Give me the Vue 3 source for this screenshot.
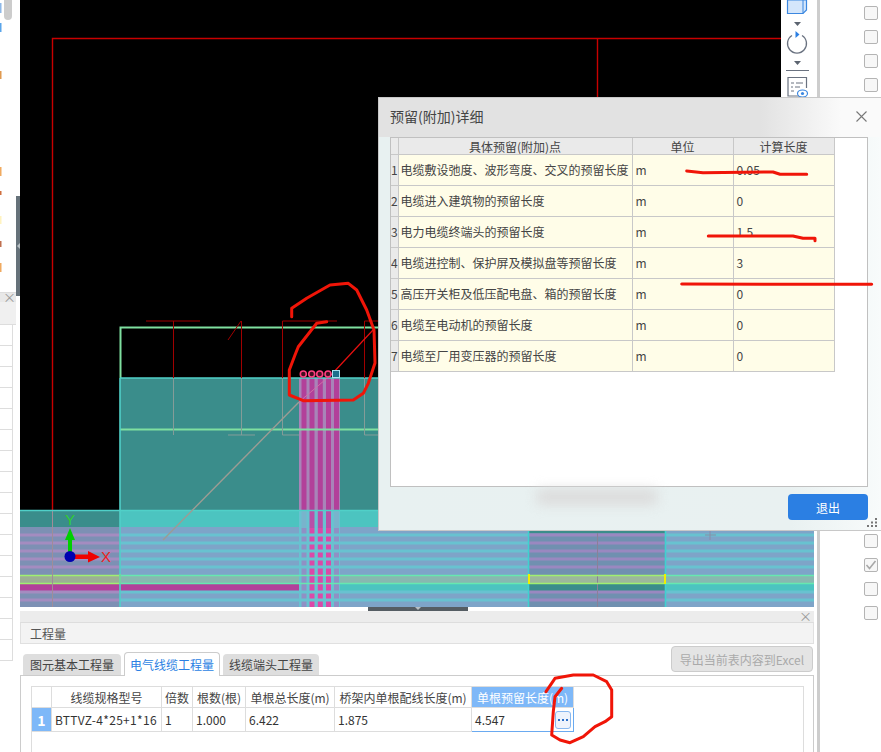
<script setup>
const details = [
  { name: '电缆敷设弛度、波形弯度、交叉的预留长度', value: '0.05' },
  { name: '电缆进入建筑物的预留长度', value: '0' },
  { name: '电力电缆终端头的预留长度', value: '1.5' },
  { name: '电缆进控制、保护屏及模拟盘等预留长度', value: '3' },
  { name: '高压开关柜及低压配电盘、箱的预留长度', value: '0' },
  { name: '电缆至电动机的预留长度', value: '0' },
  { name: '电缆至厂用变压器的预留长度', value: '0' },
]

const quantityCols = [
  { label: '', width: 20 },
  { label: '线缆规格型号', width: 110 },
  { label: '倍数', width: 31 },
  { label: '根数(根)', width: 53 },
  { label: '单根总长度(m)', width: 89 },
  { label: '桥架内单根配线长度(m)', width: 137 },
  { label: '单根预留长度(m)', width: 102 },
]

// horizontal stripes of the slab in the lower part of the drawing
const stripes = [533.5, 541.5, 549.5, 557.5, 565.5, 590.5, 598.5]
const columnBars = [301.5, 309.5, 317.8, 326, 334]
const circles = [303.3, 311.7, 319.7, 328]
const checkboxes = Array.from({ length: 26 }, (_, i) => i)
const sideRows = Array.from({ length: 16 }, (_, i) => i)
const sideMarks = [
  { y: 3, h: 10, c: '#8db8e8' }, { y: 23, h: 9, c: '#5aa5ea' }, { y: 71, h: 8, c: '#e09a50' },
  { y: 167, h: 9, c: '#f0aa60' }, { y: 191, h: 4, c: '#d07040' }, { y: 216, h: 8, c: '#fff3c0' },
  { y: 241, h: 6, c: '#c07050' }, { y: 263, h: 9, c: '#f0aa60' }, { y: 484, h: 3, c: '#334' },
]

const lowerBarColor = (i) => (i === 0 || i === 4 ? '#9090c4' : '#dc48a8')
const midBarColor = (i) => (i === 0 || i === 4 ? '#78b4cc' : '#b850a8')
</script>

<template>
  <div class="app">
    <aside class="side">
      <div class="side-top">
        <div class="thumb"></div>
        <svg class="side-marks" width="2" height="290">
          <rect v-for="m in sideMarks" :key="m.y" x="0" :y="m.y" width="1.5" :height="m.h" :fill="m.c" />
        </svg>
        <div class="splitter"><span class="splitter-arrow"></span></div>
      </div>
      <div class="side-head"><span class="side-x">×</span></div>
      <div class="side-sub"></div>
      <div v-for="r in sideRows" :key="r" class="side-row"></div>
    </aside>

    <main class="center">
      <svg class="cad" width="794" height="607" viewBox="20 0 794 607">
        <rect x="20" y="0" width="794" height="607" fill="#000" />
        <!-- frame -->
        <path d="M52.5 511V38.5H781M597.5 38.500V97" fill="none" stroke="#c80000" stroke-width="1.4" />
        <!-- slab -->
        <rect x="120" y="378" width="694" height="132" fill="#3a8d8b" />
        <rect x="20" y="511" width="100" height="17" fill="#3a8d8b" />
        <rect x="120" y="511" width="694" height="17" fill="#4cc4c0" />
        <rect x="20" y="527" width="100" height="80" fill="#7d90b4" />
        <rect x="120" y="527" width="694" height="80" fill="#7ea4c8" />
        <rect x="529" y="527" width="136" height="80" fill="#7090b0" />
        <rect x="529" y="527" width="136" height="6" fill="#3a8d8b" />
        <rect x="20" y="576" width="100" height="8" fill="#9cb094" />
        <rect x="120" y="576" width="694" height="8" fill="#88b8b0" />
        <rect x="529" y="576" width="136" height="8" fill="#9cb89c" />
        <rect x="20" y="584" width="279" height="7" fill="#b2409a" />
        <rect x="340" y="584" width="189" height="7" fill="#4cc4c0" />
        <rect x="529" y="584" width="136" height="7" fill="#3a8d8b" />
        <rect x="665" y="584" width="149" height="7" fill="#4cc4c0" />
        <!-- cable column -->
        <rect x="299" y="378" width="41" height="132" fill="#a884b8" />
        <rect v-for="x in columnBars" :key="x" :x="x" y="378" width="5" height="132" fill="#b2409a" />
        <rect x="299" y="510" width="41" height="97" fill="#68c2d0" />
        <rect v-for="(x, i) in columnBars" :key="'mid' + x" :x="x" y="510" width="5" height="18" :fill="midBarColor(i)" />
        <rect v-for="(x, i) in columnBars" :key="'low' + x" :x="x" y="528" width="5" height="79" :fill="lowerBarColor(i)" />
        <g v-for="y in stripes" :key="y">
          <rect x="20" :y="y" width="100" height="3" fill="#a48cc0" />
          <rect x="120" :y="y" width="409" height="3" fill="#68c2d0" />
          <rect x="529" :y="y" width="136" height="3" fill="#9a88c0" />
          <rect x="665" :y="y" width="149" height="3" fill="#68c2d0" />
        </g>
        <path d="M597.5 533V607" stroke="#8a8098" stroke-width="1" />
        <path d="M705 535H716M710 531V540" stroke="#8a8ca8" stroke-width="1" />
        <path d="M20 575.5H120M20 583.5H120M529 575.500H665M529 583.500H665" stroke="#a0f070" stroke-width="1.4" />
        <path d="M120 575.5H529M120 583.5H529M665 575.500H814M665 583.500H814" stroke="#66e8b0" stroke-width="1.4" />
        <path d="M120 574V584M529 574V584M665 574V584" stroke="#f0f000" stroke-width="2" />
        <path d="M528.500 510V574M665.500 510V574M528.500 584V607M665.500 584V607" stroke="#40d0d0" stroke-width="1.6" />
        <path d="M52.5 511V607" stroke="#a08c98" stroke-width="1" />
        <!-- outline -->
        <path d="M120.5 378V327.500H378M120 429.500H378" fill="none" stroke="#7fe0a0" stroke-width="2" />
        <path d="M120 378H378M20 510.500H814M120 378V607" fill="none" stroke="#50d0c8" stroke-width="1.6" />
        <!-- section marks -->
        <path d="M146 321H200M173.500 321V378M241.500 321V378M241 321L228 340M282.500 378V321H337M364.500 378V321H378" fill="none" stroke="#a00000" stroke-width="1" />
        <path d="M173.500 378V435M241.500 378V435M228 435H255M282.500 378V435H299M364.500 378V435H378" fill="none" stroke="#849c98" stroke-width="1" />
        <!-- leader -->
        <path d="M332 374L373 330" stroke="#e81010" stroke-width="1.2" />
        <path d="M332 374L299 402" stroke="#d070a8" stroke-width="1" />
        <path d="M299 402L163 540" stroke="#9c9c94" stroke-width="1.4" />
        <circle v-for="x in circles" :key="x" :cx="x" cy="374" r="3" fill="#401020" stroke="#ff3f80" stroke-width="1.6" />
        <rect x="332.500" y="370.500" width="7" height="7" fill="#1c6f8c" stroke="#a8e0f0" />
        <!-- axis gizmo -->
        <path d="M68 552V540H65L70 528L75 540H72V552Z" fill="#00d000" />
        <path d="M75 554.500H88V551L100 557L88 562.500V559H75Z" fill="#f00000" />
        <circle cx="70" cy="556.500" r="5.500" fill="#0000b0" />
        <text x="70" y="525" class="axis" fill="#30d030">Y</text>
        <text x="106" y="562" class="axis" fill="#f02020">X</text>
        <!-- scribble on the drawing -->
        <path class="ink" d="M291.7 316.7L291.7 308.3L306.7 298.3L330 285L348.3 283.3L356.7 290L366.7 310L374 330L375 363L368.3 383.3L363.3 393.3L353.3 400L303.3 400.7L289.3 395L289.3 370L295 355L298.3 346.7L316.7 323.3L326.7 321.7" />
      </svg>

      <div class="toolbar">
        <svg width="34" height="97" viewBox="781 0 34 97">
          <path d="M787.500 0V13.500H803L806.500 10V0Z" fill="#d4e6fb" stroke="#3b87e0" stroke-width="1.2" />
          <path d="M803 0V13.500" stroke="#3b87e0" stroke-width="1" />
          <path d="M794 22H801L797.500 26Z" fill="#5c6470" />
          <path d="M792 35.500A9.500 9.500 0 1 0 802 35.500" fill="none" stroke="#6a7280" stroke-width="1.3" />
          <path d="M795.500 31L799.500 34.500L795.500 38Z" fill="#2b7fe3" />
          <path d="M794 61H801L797.500 65Z" fill="#5c6470" />
          <path d="M786 70.500H809" stroke="#6a7280" stroke-width="1" />
          <path d="M801 96H788V77.500H806.500V88" fill="none" stroke="#6a7280" stroke-width="1.2" />
          <path d="M791 83H794M796 83H803M791 87H793M795 87H800M791 91H794" stroke="#6a7280" stroke-width="1" />
          <ellipse cx="802.500" cy="93.500" rx="5" ry="3.500" fill="#fff" stroke="#3b87e0" stroke-width="1.2" />
          <circle cx="802.500" cy="93.500" r="1.600" fill="#3b87e0" />
        </svg>
      </div>

      <div class="drag-handle"><span class="drag-arrow"></span></div>

      <section class="panel">
        <div class="panel-strip"><span class="panel-x">×</span></div>
        <div class="panel-title">工程量</div>
        <div class="tab-row">
          <div class="tabs">
            <div class="tab">图元基本工程量</div>
            <div class="tab active">电气线缆工程量</div>
            <div class="tab">线缆端头工程量</div>
          </div>
          <button class="export">导出当前表内容到Excel</button>
        </div>
        <div class="tab-body">
          <div class="qty-box">
            <table class="qty">
              <colgroup>
                <col v-for="c in quantityCols" :key="c.label" :style="{ width: c.width + 'px' }" />
              </colgroup>
              <thead>
                <tr>
                  <th v-for="(c, i) in quantityCols" :key="c.label" :class="{ picked: i === 6 }">{{ c.label }}</th>
                </tr>
              </thead>
              <tbody>
                <tr>
                  <td class="row-no">1</td>
                  <td class="spec">BTTVZ-4*25+1*16</td>
                  <td>1</td>
                  <td>1.000</td>
                  <td>6.422</td>
                  <td>1.875</td>
                  <td class="editing">
                    <div class="edit-cell">
                      <span>4.547</span>
                      <span class="more">
                        <svg width="10" height="4" viewBox="0 0 10 4">
                          <path d="M0 1h2v2H0zM4 1h2v2H4zM8 1h2v2H8z" fill="#2b6fc8" />
                        </svg>
                      </span>
                    </div>
                  </td>
                </tr>
              </tbody>
            </table>
          </div>
        </div>
      </section>
    </main>

    <aside class="right">
      <div class="checks">
        <span v-for="c in checkboxes" :key="c" class="check">
          <svg v-if="c === 23" width="14" height="14" viewBox="0 0 14 14">
            <path d="M2.500 7L5.500 10.500L11.500 3" fill="none" stroke="#a8a8a8" stroke-width="1.600" />
          </svg>
        </span>
      </div>
    </aside>

    <div class="dialog">
      <header class="dialog-head">
        <span class="dialog-title">预留(附加)详细</span>
        <svg class="dialog-close" width="13" height="13" viewBox="0 0 13 13">
          <path d="M1.500 1.500L11.500 11.500M11.500 1.500L1.500 11.500" stroke="#777" stroke-width="1.100" />
        </svg>
      </header>
      <div class="dialog-grid">
        <table class="detail">
          <colgroup>
            <col class="c-no" /><col class="c-name" /><col class="c-unit" /><col class="c-len" />
          </colgroup>
          <thead>
            <tr><th></th><th>具体预留(附加)点</th><th>单位</th><th>计算长度</th></tr>
          </thead>
          <tbody>
            <tr v-for="(d, i) in details" :key="d.name">
              <td class="no">{{ i + 1 }}</td>
              <td>{{ d.name }}</td>
              <td>m</td>
              <td>{{ d.value }}</td>
            </tr>
          </tbody>
        </table>
      </div>
      <footer class="dialog-foot">
        <span class="ghost"></span>
        <button class="quit">退出</button>
        <svg class="grip" width="11" height="9" viewBox="0 0 11 9">
          <path d="M8 0h2v2H8zM4 3.500h2v2H4zM8 3.500h2v2H8zM0 7h2v2H0zM4 7h2v2H4zM8 7h2v2H8z" fill="#777" />
        </svg>
      </footer>
    </div>

    <!-- red pen marks made on top of the screenshot -->
    <svg class="marks" width="881" height="752">
      <path class="ink" d="M686.700 171L703 172.700L773 172L780 174.300L806.700 174.300" />
      <path class="ink" d="M708.300 236L793 236L803 238.300L815 238.300L815 240.700" />
      <path class="ink" d="M681.700 284L871.700 284.300" />
      <path class="ink" d="M546 691.700L555 678.300L573.300 675L593.300 675L606.700 681.700L611.700 690L611.700 716.700L605 721.700L595 726.700L583.300 736.700L570 742.700L560 740L551.700 735L553.300 711.700L555 696.700L561.700 688.300" />
    </svg>
  </div>
</template>

<style scoped>
.app {
  position: relative;
  display: flex;
  width: 881px;
  height: 752px;
  overflow: hidden;
  background: #fff;
  font-family: "Noto Sans CJK SC", "Liberation Sans", sans-serif;
  font-size: 12px;
  color: #333;
}

.side {
  width: 20px;
  flex: none;
  display: flex;
  flex-direction: column;
}

.side-top {
  position: relative;
  height: 293px;
  flex: none;
  border-bottom: 1px solid #ddd;
  box-sizing: border-box;
}

.thumb {
  position: absolute;
  left: 4px;
  top: 0;
  width: 8px;
  height: 20px;
  background: #ccc;
  border-radius: 0 0 4px 4px;
}

.side-marks {
  position: absolute;
  left: 0;
  top: 0;
}

.splitter {
  position: absolute;
  left: 16px;
  top: 196px;
  width: 4px;
  height: 100px;
  background: #66727a;
}

.splitter-arrow {
  position: absolute;
  left: 1px;
  top: 47px;
  border: 3px solid transparent;
  border-left-width: 0;
  border-right: 3px solid #b8c0c4;
}

.side-head {
  height: 9px;
  width: 16px;
  background: #e8e8e8;
  position: relative;
}

.side-x {
  position: absolute;
  left: 3px;
  top: -3px;
  font-size: 13px;
  line-height: 14px;
  color: #999;
}

.side-sub {
  height: 23px;
  width: 16px;
  background: #f0f0f0;
  border-bottom: 1px solid #ddd;
  box-sizing: border-box;
}

.side-row {
  height: 21px;
  width: 13px;
  flex: none;
  box-sizing: border-box;
  border-bottom: 1px solid #ddd;
  border-right: 1px solid #ddd;
}

.center {
  position: relative;
  width: 794px;
  flex: none;
  display: flex;
  flex-direction: column;
}

.cad {
  display: block;
  flex: none;
}

.toolbar {
  position: absolute;
  left: 761px;
  top: 0;
  width: 34px;
  height: 97px;
  background: #fff;
}

.toolbar svg {
  display: block;
}

.drag-handle {
  position: relative;
  height: 4px;
  flex: none;
}

.drag-handle::before {
  content: "";
  position: absolute;
  left: 348px;
  top: 0;
  width: 100px;
  height: 4px;
  background: #555d63;
}

.drag-arrow {
  position: absolute;
  left: 395px;
  top: 0;
  border: 3px solid transparent;
  border-top-color: #b8c0c4;
}

.panel {
  flex: 1;
  display: flex;
  flex-direction: column;
  min-height: 0;
}

.panel-strip {
  position: relative;
  height: 11px;
  flex: none;
  background: #ececec;
}

.panel-x {
  position: absolute;
  right: 2px;
  top: -2px;
  font-size: 13px;
  line-height: 14px;
  color: #999;
}

.panel-title {
  height: 22px;
  flex: none;
  line-height: 21px;
  padding-left: 9px;
  background: #f3f3f3;
  border: 1px solid #e0e0e0;
  border-top-color: #ddd;
  box-sizing: border-box;
  color: #555;
}

.tab-row {
  height: 31px;
  flex: none;
  display: flex;
  justify-content: space-between;
  padding: 2px 1px 0 3px;
  box-sizing: border-box;
}

.tabs {
  display: flex;
  align-items: flex-end;
  gap: 3px;
}

.tab {
  width: 96px;
  height: 21px;
  line-height: 21px;
  text-align: center;
  background: #dedede;
  border-radius: 4px 4px 0 0;
  color: #444;
}

.tab:first-child {
  width: 98px;
}

.tab.active {
  height: 24px;
  line-height: 23px;
  background: #fff;
  border: 1px solid #ccc;
  border-bottom: none;
  box-sizing: border-box;
  margin-bottom: -1px;
  position: relative;
  color: #2b7fe3;
}

.export {
  width: 142px;
  height: 26px;
  padding: 0;
  font: inherit;
  background: #e4e4e4;
  border: 1px solid #ccc;
  border-radius: 4px;
  color: #aaa;
}

.tab-body {
  flex: 1;
  display: flex;
  border: 1px solid #ccc;
  border-bottom: none;
  padding: 10px 9px 0 10px;
  min-height: 0;
}

.qty-box {
  flex: 1;
  border: 1px solid #ddd;
  border-bottom: none;
}

.qty {
  border-collapse: collapse;
  table-layout: fixed;
  width: 542px;
  margin: -1px 0 0 -1px;
}

.qty th,
.qty td {
  border: 1px solid #ddd;
  padding: 0 3px;
  font-weight: normal;
  text-align: left;
  white-space: nowrap;
  overflow: hidden;
}

.qty th {
  height: 20px;
  text-align: center;
  color: #444;
}

.qty td {
  height: 23px;
}

.qty .spec {
  letter-spacing: 0.3px;
}

.qty th.picked {
  background: #7eb8f8;
  color: #fff;
}

.qty .row-no {
  background: #7eb8f8;
  color: #fff;
  text-align: center;
  font-weight: bold;
  font-size: 14px;
  padding: 0;
}

.qty .editing {
  border: 1px solid #6aaaf0;
  padding: 0 2px 0 3px;
}

.edit-cell {
  display: flex;
  align-items: center;
  justify-content: space-between;
}

.more {
  display: flex;
  align-items: center;
  justify-content: center;
  width: 16px;
  height: 18px;
  background: #eef3fc;
  border: 1px solid #88b8f0;
  border-radius: 3px;
  box-sizing: border-box;
}

.right {
  flex: 1;
  position: relative;
  border-left: 3px solid #cdcdcd;
  margin-left: 3px;
  overflow: hidden;
}

.checks {
  display: flex;
  flex-direction: column;
  gap: 10px;
  padding: 6px 0 0 44px;
}

.check {
  display: block;
  width: 14px;
  height: 14px;
  flex: none;
  box-sizing: border-box;
  border: 1px solid #b4b4b4;
  border-radius: 2px;
  background: #f7f7f7;
}

.check svg {
  display: block;
  margin: -1px;
}

.dialog {
  position: absolute;
  left: 378px;
  top: 97px;
  width: 503px;
  height: 434px;
  box-sizing: border-box;
  display: flex;
  flex-direction: column;
  background: linear-gradient(90deg, #e8f1f1 0, #e9f1f1 82%, #f8fbfb 100%);
  border: 1px solid #c8c8c8;
  border-right: none;
}

.dialog-head {
  height: 39px;
  flex: none;
  position: relative;
  background: linear-gradient(90deg, #e2e2e2 0, #e2e2e2 76%, #fafafa 92%);
}

.dialog-title {
  position: absolute;
  left: 11px;
  top: 8px;
  font-size: 14px;
  line-height: 20px;
  color: #444;
}

.dialog-close {
  position: absolute;
  right: 13px;
  top: 12px;
}

.dialog-grid {
  height: 350px;
  flex: none;
  margin: 0 13px 0 11px;
  border: 1px solid #c0c0c0;
  box-sizing: border-box;
  background: #fff;
}

.detail {
  border-collapse: collapse;
  table-layout: fixed;
  width: 443px;
}

.c-no { width: 7px; }
.c-name { width: 234px; }
.c-unit { width: 101px; }
.c-len { width: 101px; }

.detail th,
.detail td {
  border: 1px solid #c8c8c8;
  font-weight: normal;
  white-space: nowrap;
  overflow: hidden;
}

.detail tr > :first-child {
  border-left: none;
}

.detail thead th {
  border-top: none;
  height: 15px;
  padding: 1px 0 0;
  line-height: 15px;
  background: #eaeaea;
  color: #444;
}

.detail td {
  height: 28px;
  padding: 0 2px 2px 2px;
  background: #fffde8;
  color: #444;
}

.detail td:nth-child(3),
.detail td:nth-child(4) {
  padding-left: 3px;
}

.detail .no {
  padding: 0 0 2px;
  background: #eaeaea;
  text-align: center;
  font-size: 12px;
}

.dialog-foot {
  flex: 1;
  display: flex;
  justify-content: flex-end;
  align-items: flex-start;
  padding: 7px 13px 0 0;
  position: relative;
}

.ghost {
  position: absolute;
  left: 158px;
  top: 2px;
  width: 120px;
  height: 16px;
  background: #dcdcdc;
  filter: blur(6px);
}

.quit {
  width: 80px;
  height: 26px;
  padding: 0;
  font: inherit;
  color: #fff;
  background: #2b7fe3;
  border: none;
  border-radius: 4px;
}

.grip {
  position: absolute;
  right: 3px;
  bottom: 3px;
}

.marks {
  position: absolute;
  left: 0;
  top: 0;
  pointer-events: none;
}

.ink {
  fill: none;
  stroke: #f01508;
  stroke-width: 3;
  stroke-linecap: round;
  stroke-linejoin: round;
}

.axis {
  font-family: "Liberation Sans", sans-serif;
  font-size: 15px;
  text-anchor: middle;
}
</style>

<style>
html, body {
  margin: 0;
  background: #fff;
}
</style>
